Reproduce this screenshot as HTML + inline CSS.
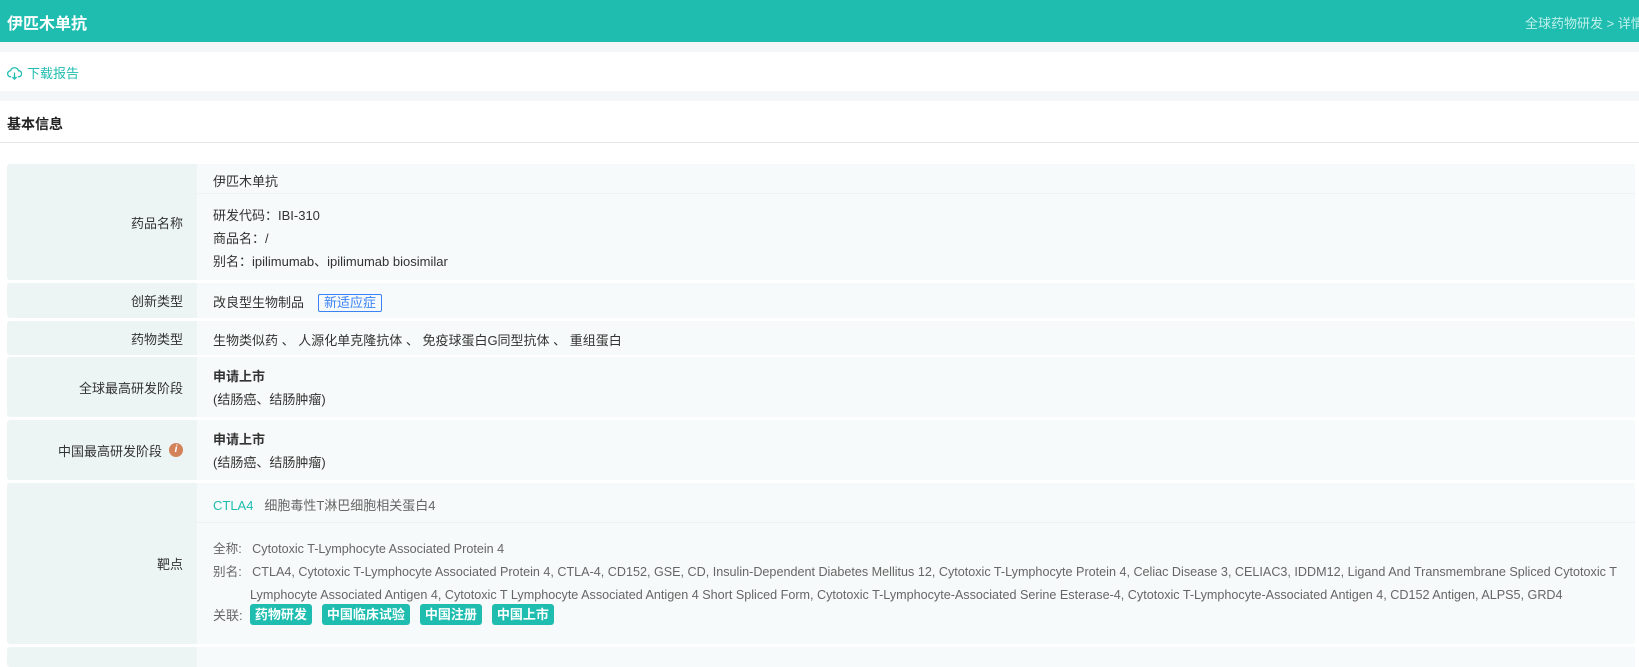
<!DOCTYPE html>
<html><head><meta charset="utf-8">
<style>
*{margin:0;padding:0;box-sizing:border-box}
body{width:1639px;height:653px;overflow:hidden;background:#fff;font-family:"Liberation Sans","Noto Sans CJK SC",sans-serif;font-size:13px;color:#333;position:relative}
.hdr{position:absolute;left:0;top:0;width:1639px;height:42px;background:#1fbdb0}
.hdr .t{position:absolute;left:7px;top:10px;color:#fff;font-weight:bold;font-size:16px}
.hdr .b{position:absolute;left:1525px;top:13px;color:#bff0ea;font-size:13px;white-space:nowrap}
.g{position:absolute;left:0;width:1639px;background:#f5f6f8}
.dl{position:absolute;left:7px;top:63px;color:#1fbdb0;font-size:13px;display:flex;align-items:center}
.sec{position:absolute;left:7px;top:114px;font-weight:bold;font-size:14px;color:#222}
.line{position:absolute;left:0;top:142px;width:1639px;height:1px;background:#e6e6e6}
.row{position:absolute;left:7px;width:1628px;display:flex}
.lab{width:190px;background:#edf5f4;display:flex;align-items:center;justify-content:flex-end;padding-right:14px;color:#333;border-radius:3px 0 0 3px}
.con{flex:1;background:#f7fafa;padding-left:16px;position:relative}
.abs{position:absolute;left:16px;white-space:nowrap}
.tag{display:inline-block;background:#1fbdb0;color:#fff;font-weight:bold;border-radius:3px;height:21px;line-height:21px;padding:0 5px;margin-right:10px}
.gr{color:#666}
</style></head><body>
<div class="hdr"><div class="t">伊匹木单抗</div><div class="b">全球药物研发 &gt; 详情</div></div>
<div class="g" style="top:42px;height:10px"></div>
<div class="dl"><svg width="15" height="14" viewBox="0 0 16 15" fill="none" stroke="#1fbdb0" stroke-width="1.4"><path d="M4.5 11.5H4a3.2 3.2 0 0 1-.3-6.4A4.5 4.5 0 0 1 12.3 5a3.2 3.2 0 0 1 .2 6.5H11.5"/><path d="M8 7v7M5.8 11.8 8 14l2.2-2.2"/></svg><span style="margin-left:5px">下载报告</span></div>
<div class="g" style="top:91px;height:10px"></div>
<div class="sec">基本信息</div>
<div class="line"></div>

<div class="row" style="top:164px;height:116px"><div class="lab">药品名称</div><div class="con">
<div class="abs" style="top:7px">伊匹木单抗</div>
<div style="position:absolute;left:0;right:0;top:29px;height:1px;background:#eef2f2"></div>
<div class="abs" style="top:40px;line-height:23px">研发代码：IBI-310<br>商品名：/<br>别名：ipilimumab、ipilimumab biosimilar</div>
</div></div>

<div class="row" style="top:283px;height:35px"><div class="lab">创新类型</div><div class="con">
<div class="abs" style="top:9px">改良型生物制品<span style="display:inline-block;margin-left:14px;border:1px solid #3b82f6;color:#3b82f6;padding:0 5px;line-height:16px;border-radius:2px">新适应症</span></div>
</div></div>

<div class="row" style="top:321px;height:34px"><div class="lab">药物类型</div><div class="con">
<div class="abs" style="top:9px">生物类似药 、 人源化单克隆抗体 、 免疫球蛋白G同型抗体 、 重组蛋白</div>
</div></div>

<div class="row" style="top:357px;height:60px"><div class="lab">全球最高研发阶段</div><div class="con">
<div class="abs" style="top:8px;line-height:23px"><b>申请上市</b><br>(结肠癌、结肠肿瘤)</div>
</div></div>

<div class="row" style="top:420px;height:60px"><div class="lab">中国最高研发阶段<span style="display:inline-block;width:14px;height:14px;border-radius:50%;background:#d4825a;color:#fff;font-size:10px;font-style:italic;font-weight:bold;text-align:center;line-height:14px;margin-left:7px">i</span></div><div class="con">
<div class="abs" style="top:8px;line-height:23px"><b>申请上市</b><br>(结肠癌、结肠肿瘤)</div>
</div></div>

<div class="row" style="top:483px;height:161px"><div class="lab">靶点</div><div class="con">
<div class="abs" style="top:12px"><span style="color:#1fbdb0">CTLA4</span>&nbsp;&nbsp; <span class="gr">细胞毒性T淋巴细胞相关蛋白4</span></div>
<div style="position:absolute;left:0;right:0;top:39px;height:1px;background:#eef2f2"></div>
<div class="abs gr" style="top:55px;line-height:23px;font-size:12.6px">全称:&nbsp;&nbsp; Cytotoxic T-Lymphocyte Associated Protein 4<br>别名:&nbsp;&nbsp; CTLA4, Cytotoxic T-Lymphocyte Associated Protein 4, CTLA-4, CD152, GSE, CD, Insulin-Dependent Diabetes Mellitus 12, Cytotoxic T-Lymphocyte Protein 4, Celiac Disease 3, CELIAC3, IDDM12, Ligand And Transmembrane Spliced Cytotoxic T<br><span style="padding-left:37px">Lymphocyte Associated Antigen 4, Cytotoxic T Lymphocyte Associated Antigen 4 Short Spliced Form, Cytotoxic T-Lymphocyte-Associated Serine Esterase-4, Cytotoxic T-Lymphocyte-Associated Antigen 4, CD152 Antigen, ALPS5, GRD4</span></div>
<div class="abs gr" style="top:121px;display:flex;align-items:center">关联:&nbsp;&nbsp; <span class="tag">药物研发</span><span class="tag">中国临床试验</span><span class="tag">中国注册</span><span class="tag">中国上市</span></div>
</div></div>

<div class="row" style="top:647px;height:20px"><div class="lab"></div><div class="con"></div></div>
</body></html>
